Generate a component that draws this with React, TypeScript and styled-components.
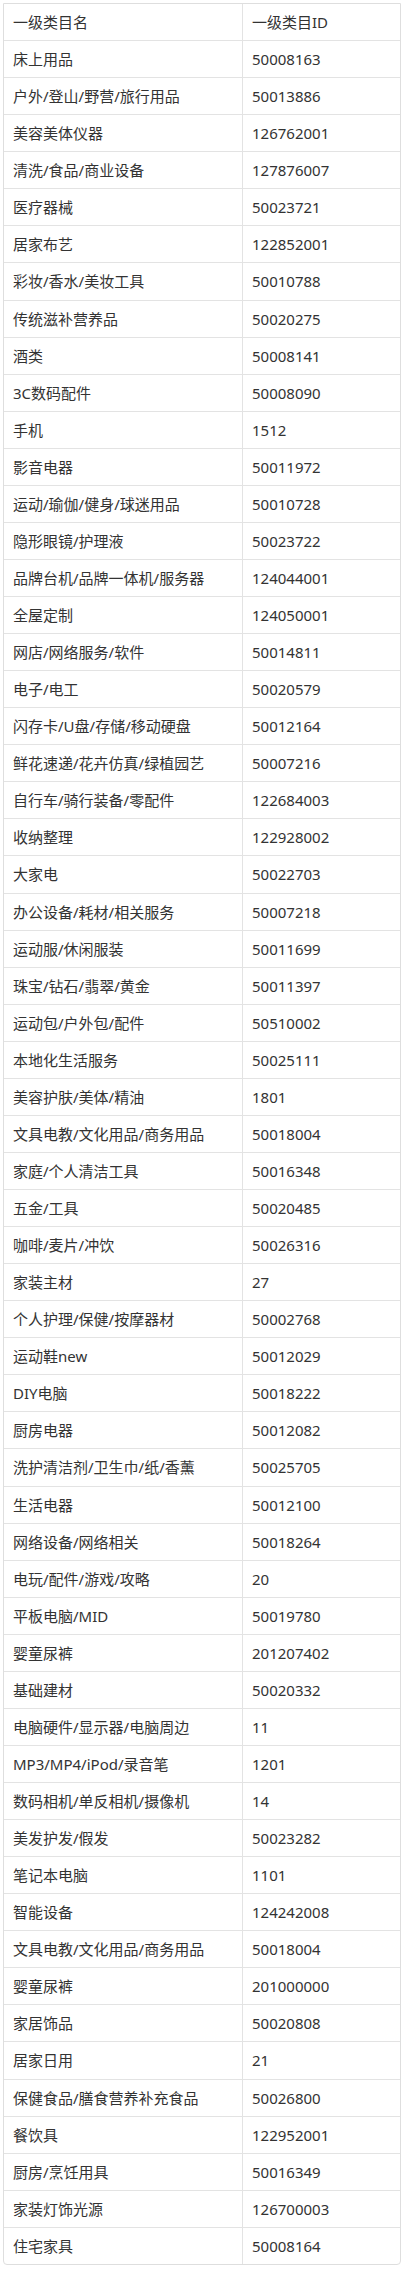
import React from "react";
import styled, { createGlobalStyle } from "styled-components";

const GlobalStyle = createGlobalStyle`
  html, body {
    margin: 0;
    padding: 0;
    background: #ffffff;
  }
  body {
    font-family: "Noto Sans", "Noto Sans CJK SC", sans-serif;
    color: #333333;
  }
`;

const Page = styled.div`
  padding: 3px 7px 7px 3px;
  width: 398px;
`;

const Card = styled.div`
  border: 1px solid #dedede;
  border-radius: 0 0 4px 4px;
  overflow: hidden;
  background: #fff;
`;

const Table = styled.table`
  width: 100%;
  border-spacing: 0;
  border-collapse: separate;
  table-layout: fixed;
  font-size: 15px;
  line-height: 20.07px;
  color: #333333;
`;

const Cell = styled.td<{ $first?: boolean; $last?: boolean }>`
  padding: 8px 9px;
  text-align: left;
  font-weight: 400;
  white-space: nowrap;
  border-bottom: ${(p) => (p.$last ? "none" : "1px solid #e3e3e3")};
  border-right: ${(p) => (p.$first ? "1px solid #e3e3e3" : "none")};
  width: ${(p) => (p.$first ? "220px" : "auto")};
`;

const HeadCell = styled(Cell).attrs({ as: "th" })``;

const rows: [string, string][] = [
  ["床上用品", "50008163"],
  ["户外/登山/野营/旅行用品", "50013886"],
  ["美容美体仪器", "126762001"],
  ["清洗/食品/商业设备", "127876007"],
  ["医疗器械", "50023721"],
  ["居家布艺", "122852001"],
  ["彩妆/香水/美妆工具", "50010788"],
  ["传统滋补营养品", "50020275"],
  ["酒类", "50008141"],
  ["3C数码配件", "50008090"],
  ["手机", "1512"],
  ["影音电器", "50011972"],
  ["运动/瑜伽/健身/球迷用品", "50010728"],
  ["隐形眼镜/护理液", "50023722"],
  ["品牌台机/品牌一体机/服务器", "124044001"],
  ["全屋定制", "124050001"],
  ["网店/网络服务/软件", "50014811"],
  ["电子/电工", "50020579"],
  ["闪存卡/U盘/存储/移动硬盘", "50012164"],
  ["鲜花速递/花卉仿真/绿植园艺", "50007216"],
  ["自行车/骑行装备/零配件", "122684003"],
  ["收纳整理", "122928002"],
  ["大家电", "50022703"],
  ["办公设备/耗材/相关服务", "50007218"],
  ["运动服/休闲服装", "50011699"],
  ["珠宝/钻石/翡翠/黄金", "50011397"],
  ["运动包/户外包/配件", "50510002"],
  ["本地化生活服务", "50025111"],
  ["美容护肤/美体/精油", "1801"],
  ["文具电教/文化用品/商务用品", "50018004"],
  ["家庭/个人清洁工具", "50016348"],
  ["五金/工具", "50020485"],
  ["咖啡/麦片/冲饮", "50026316"],
  ["家装主材", "27"],
  ["个人护理/保健/按摩器材", "50002768"],
  ["运动鞋new", "50012029"],
  ["DIY电脑", "50018222"],
  ["厨房电器", "50012082"],
  ["洗护清洁剂/卫生巾/纸/香薰", "50025705"],
  ["生活电器", "50012100"],
  ["网络设备/网络相关", "50018264"],
  ["电玩/配件/游戏/攻略", "20"],
  ["平板电脑/MID", "50019780"],
  ["婴童尿裤", "201207402"],
  ["基础建材", "50020332"],
  ["电脑硬件/显示器/电脑周边", "11"],
  ["MP3/MP4/iPod/录音笔", "1201"],
  ["数码相机/单反相机/摄像机", "14"],
  ["美发护发/假发", "50023282"],
  ["笔记本电脑", "1101"],
  ["智能设备", "124242008"],
  ["文具电教/文化用品/商务用品", "50018004"],
  ["婴童尿裤", "201000000"],
  ["家居饰品", "50020808"],
  ["居家日用", "21"],
  ["保健食品/膳食营养补充食品", "50026800"],
  ["餐饮具", "122952001"],
  ["厨房/烹饪用具", "50016349"],
  ["家装灯饰光源", "126700003"],
  ["住宅家具", "50008164"],
];

export default function App() {
  return (
    <>
      <GlobalStyle />
      <Page>
        <Card>
          <Table>
            <thead>
              <tr>
                <HeadCell $first>一级类目名</HeadCell>
                <HeadCell>一级类目ID</HeadCell>
              </tr>
            </thead>
            <tbody>
              {rows.map(([name, id], i) => {
                const last = i === rows.length - 1;
                return (
                  <tr key={i}>
                    <Cell $first $last={last}>
                      {name}
                    </Cell>
                    <Cell $last={last}>{id}</Cell>
                  </tr>
                );
              })}
            </tbody>
          </Table>
        </Card>
      </Page>
    </>
  );
}
